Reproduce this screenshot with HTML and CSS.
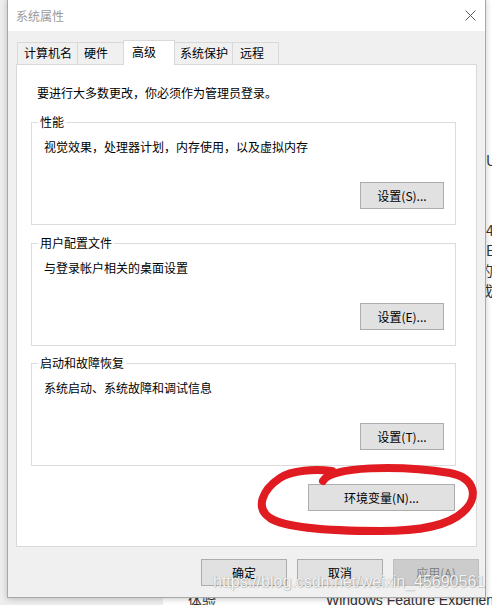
FILE: index.html
```html
<!DOCTYPE html>
<html lang="zh-CN">
<head>
<meta charset="utf-8">
<title>系统属性</title>
<link rel="stylesheet" href="styles.css">
</head>
<body>
<div class="desktop">
  <aside class="nav"></aside>
  <main class="page">
    <div class="page-side">
      <p class="line first">U</p>
      <p class="line gap">4</p>
      <p class="line">E</p>
      <p class="line tucked">的</p>
      <p class="line tucked">或</p>
    </div>
    <div class="page-foot">
      <span class="foot-a">体验</span>
      <span class="foot-b">Windows Feature Experience Pack</span>
    </div>
  </main>
</div>

<div class="dialog">
  <div class="titlebar">
    <span class="title">系统属性</span>
    <svg class="close" width="11" height="11" viewBox="0 0 11 11"><path d="M0.5 0.5 L10.5 10.5 M10.5 0.5 L0.5 10.5" stroke="#5a5a5a" stroke-width="1" fill="none"/></svg>
  </div>
  <div class="dlg-body">
    <div class="tabs">
      <div class="tab t1">计算机名</div>
      <div class="tab t2">硬件</div>
      <div class="tab t3 active">高级</div>
      <div class="tab t4">系统保护</div>
      <div class="tab t5">远程</div>
    </div>
    <div class="panel">
      <p class="intro">要进行大多数更改，你必须作为管理员登录。</p>
      <fieldset class="group">
        <legend>性能</legend>
        <div class="group-body">
          <p class="desc">视觉效果，处理器计划，内存使用，以及虚拟内存</p>
          <div class="actions"><button class="btn">设置(S)...</button></div>
        </div>
      </fieldset>
      <fieldset class="group">
        <legend>用户配置文件</legend>
        <div class="group-body">
          <p class="desc">与登录帐户相关的桌面设置</p>
          <div class="actions"><button class="btn">设置(E)...</button></div>
        </div>
      </fieldset>
      <fieldset class="group last">
        <legend>启动和故障恢复</legend>
        <div class="group-body">
          <p class="desc">系统启动、系统故障和调试信息</p>
          <div class="actions"><button class="btn">设置(T)...</button></div>
        </div>
      </fieldset>
      <div class="env"><button class="btn wide">环境变量(N)...</button></div>
    </div>
  </div>
  <div class="footer">
    <button class="btn foot">确定</button>
    <button class="btn foot">取消</button>
    <button class="btn foot disabled">应用(A)</button>
  </div>
</div>

<div class="watermark">https://blog.csdn.net/weixin_45690561</div>

<svg class="ink" width="492" height="605" viewBox="0 0 492 605">
  <path d="M323 481 C330 466 400 465 450 473 C476 478 479 498 463 512 C448 526 420 531 380 531 C330 531 286 528 270 518 C255 508 262 490 280 478 C292 470 315 469 332 471" fill="none" stroke="#e11b22" stroke-width="8" stroke-linecap="round" stroke-linejoin="round"/>
</svg>
</body>
</html>
```

FILE: styles.css
```css
* { box-sizing: border-box; }

html, body {
  margin: 0;
  height: 605px;
  overflow: hidden;
}

body {
  position: relative;
  width: 492px;
  font-family: "Noto Sans CJK SC", "Noto Sans", sans-serif;
  font-size: 12px;
  line-height: 16px;
  color: #000;
  background: #fff;
}

p { margin: 0; }

/* background page */
.desktop {
  display: grid;
  grid-template-columns: 163px 1fr;
  height: 605px;
}

.nav { background: #eeeeee; }

.page {
  display: flex;
  flex-direction: column;
  background: #fff;
  color: #333;
}

.page-side {
  margin-left: 323px;
  padding-top: 150px;
  font-size: 14px;
  line-height: 20px;
}

.page-side .gap { margin-top: 50px; }
.page-side .tucked { margin-left: -7px; }

.page-foot {
  margin-top: auto;
  height: 15px;
  display: flex;
  font-family: "Liberation Sans", "Noto Sans CJK SC", sans-serif;
  font-size: 14px;
  line-height: 20px;
  white-space: nowrap;
}

.foot-a { margin-left: 25px; width: 138px; font-family: "Noto Sans CJK SC", sans-serif; }

/* dialog */
.dialog {
  position: absolute;
  left: 7px;
  top: -1px;
  width: 479px;
  border: 1px solid #a8a8a8;
  background: #f0f0f0;
  box-shadow: 0 1px 6px rgba(0, 0, 0, 0.22);
  display: flex;
  flex-direction: column;
}

.titlebar {
  height: 31px;
  background: #fff;
  display: flex;
  align-items: center;
  justify-content: space-between;
  padding: 0 9px 0 8px;
}

.title { color: #9a9a9a; }

.close { display: block; }

.dlg-body {
  padding: 9px 8px 0 8px;
  display: flex;
  flex-direction: column;
}

.tabs {
  display: flex;
  align-items: flex-end;
  height: 24px;
  padding-left: 1px;
  position: relative;
  z-index: 1;
}

.tab {
  height: 22px;
  border: 1px solid #d9d9d9;
  border-bottom: none;
  background: #f0f0f0;
  padding-left: 6px;
  line-height: 20px;
  margin-left: -1px;
  white-space: nowrap;
}

.tab.t1 { margin-left: 0; width: 61px; }
.tab.t2 { width: 47px; }
.tab.t3 { width: 52px; }
.tab.t4 { width: 59px; padding-left: 5px; }
.tab.t5 { width: 47px; padding-left: 7px; }

.tab.active {
  height: 25px;
  margin-bottom: -1px;
  background: #fff;
  padding-left: 8px;
  line-height: 22px;
  position: relative;
  z-index: 2;
}

.panel {
  background: #fff;
  border: 1px solid #d9d9d9;
  padding: 20px 20px 35px 14px;
}

.intro { margin: 0 0 13px 6px; }

.group {
  margin: 0 0 10px 0;
  padding: 0;
  min-width: 0;
  border: 1px solid #dcdcdc;
}

.group + .group.last { margin-top: -1px; }

.group legend {
  margin-left: 6px;
  padding: 0 2px;
  line-height: 16px;
}

.group-body { padding: 9px 11px 15px 12px; }

.actions {
  display: flex;
  justify-content: flex-end;
  margin-top: 27px;
}

.btn {
  height: 27px;
  width: 84px;
  padding: 0;
  background: #e1e1e1;
  border: 1px solid #adadad;
  border-radius: 0;
  font: inherit;
  font-size: 12px;
  line-height: 25px;
  color: #000;
  text-align: center;
}

.env {
  display: flex;
  justify-content: flex-end;
  margin-top: 18px;
  padding-right: 1px;
}

.btn.wide { width: 147px; }

.footer {
  display: flex;
  justify-content: flex-end;
  gap: 10px;
  padding: 12px 6px 11px 0;
}

.btn.foot { width: 86px; }

.btn.disabled {
  background: #cccccc;
  border-color: #bfbfbf;
  color: #838383;
}

/* overlays */
.watermark {
  position: absolute;
  left: 213px;
  top: 572px;
  font-family: "Liberation Sans", Arial, sans-serif;
  font-size: 16px;
  line-height: 20px;
  color: rgba(255, 255, 255, 0.92);
  text-shadow: 0 0 1px rgba(0, 0, 0, 0.3), 1px 1px 1px rgba(0, 0, 0, 0.15);
  white-space: nowrap;
}

.ink {
  position: absolute;
  left: 0;
  top: 0;
  pointer-events: none;
}
```
